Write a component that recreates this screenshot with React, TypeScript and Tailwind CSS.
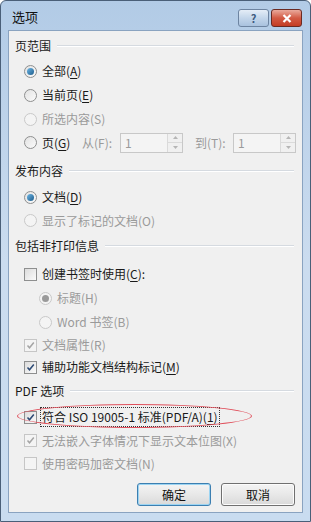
import React from 'react';

const FONT = "font-['Noto_Sans_CJK_SC','Noto_Sans',sans-serif]";

const Radio: React.FC<{ checked?: boolean; disabled?: boolean }> = ({ checked, disabled }) => (
  <span
    className={`w-[13px] h-[13px] rounded-full border flex items-center justify-center shrink-0 ${
      disabled ? 'border-[#c9c9c9] bg-[#f4f4f4]' : 'border-[#8e8f8f] bg-gradient-to-br from-[#e2e2e2] to-[#fbfbfb]'
    }`}
  >
    {checked && (
      <span
        className={`w-[7px] h-[7px] rounded-full ${
          disabled ? 'bg-[#9a9a9a]' : 'bg-gradient-to-br from-[#6eb7e6] to-[#1b5d8c]'
        }`}
      />
    )}
  </span>
);

const Check: React.FC<{ checked?: boolean; disabled?: boolean }> = ({ checked, disabled }) => (
  <span
    className={`w-[13px] h-[13px] border flex items-center justify-center shrink-0 ${
      disabled ? 'border-[#c6c6c6] bg-[#f4f4f4]' : 'border-[#8e8f8f] bg-gradient-to-br from-[#dcdcdc] to-[#fbfbfb]'
    }`}
  >
    {checked && (
      <svg width="9" height="9" viewBox="0 0 9 9">
        <path
          d="M1.5 4.5 L3.5 6.8 L7.8 1.5"
          fill="none"
          stroke={disabled ? '#a5a5a5' : '#2c4a75'}
          strokeWidth="1.5"
        />
      </svg>
    )}
  </span>
);

const Header: React.FC<{ text: string; className?: string }> = ({ text, className }) => (
  <div className={`h-[20px] flex items-center pl-[6px] pr-[8px] gap-[6px] ${className ?? ''}`}>
    <span className="text-[#1a1a1a]">{text}</span>
    <div className="flex-1 flex flex-col">
      <div className="h-px bg-[#d5dae0]" />
      <div className="h-px bg-white" />
    </div>
  </div>
);

const U: React.FC<{ children: React.ReactNode }> = ({ children }) => <span className="underline underline-offset-2">{children}</span>;

const Spin: React.FC<{ className?: string }> = ({ className }) => (
  <div className={`h-[20px] border border-[#c8c8c8] bg-[#f4f4f4] flex ${className ?? ''}`}>
    <span className="flex-1 pl-[4px] text-[#9a9a9a] leading-[18px]">1</span>
    <div className="w-[15px] flex flex-col border-l border-[#dadada]">
      <div className="flex-1 flex items-center justify-center border-b border-[#dadada] bg-[#f0f0f0]">
        <svg width="5" height="3" viewBox="0 0 5 3"><path d="M0 3 L2.5 0 L5 3Z" fill="#b5b5b5" /></svg>
      </div>
      <div className="flex-1 flex items-center justify-center bg-[#f0f0f0]">
        <svg width="5" height="3" viewBox="0 0 5 3"><path d="M0 0 L2.5 3 L5 0Z" fill="#b5b5b5" /></svg>
      </div>
    </div>
  </div>
);

const App: React.FC = () => {
  return (
    <div className={`w-[311px] h-[522px] ${FONT} text-[12px] text-[#1a1a1a] border border-[#4a5f78] rounded-t-[6px] bg-gradient-to-b from-[#b2cbe6] via-[#cbdcef] to-[#c9dcf0] flex flex-col overflow-hidden`}>
      {/* Title bar */}
      <div className="h-[29px] flex items-start shrink-0">
        <span className="ml-[11px] mt-[6px] text-[13px] text-[#111]">选项</span>
        <div className="ml-auto mt-[8px] mr-[8px] flex gap-[2px]">
          <div className="w-[31px] h-[18px] rounded-[3px] border border-[#6d84a1] bg-gradient-to-b from-[#e4edf7] via-[#c3d6ea] to-[#a9c2de] flex items-center justify-center">
            <span className="text-[11px] font-bold text-[#3c5a80] leading-none">?</span>
          </div>
          <div className="w-[31px] h-[18px] rounded-[3px] border border-[#6b2a22] bg-gradient-to-b from-[#e9a99c] via-[#d25a44] to-[#c43c22] flex items-center justify-center">
            <svg width="10" height="9" viewBox="0 0 10 9">
              <path d="M1.5 1 L8.5 8 M8.5 1 L1.5 8" stroke="#fff" strokeWidth="2.2" />
            </svg>
          </div>
        </div>
      </div>

      {/* Client area */}
      <div className="mx-[7px] mb-[8px] flex-1 bg-[#f0f0f0] border border-[#8aa3c0] relative flex flex-col">
        <Header text="页范围" className="mt-[5px]" />
        <div className="pl-[15px] flex flex-col mt-[3px]">
          <div className="h-[24px] flex items-center gap-[5px]"><Radio checked /><span>全部(<U>A</U>)</span></div>
          <div className="h-[24px] flex items-center gap-[5px]"><Radio /><span>当前页(<U>E</U>)</span></div>
          <div className="h-[24px] flex items-center gap-[5px] text-[#9a9a9a]"><Radio disabled /><span>所选内容(S)</span></div>
          <div className="h-[23px] flex items-center">
            <span className="flex items-center gap-[5px] w-[58px]"><Radio /><span>页(<U>G</U>)</span></span>
            <span className="text-[#9a9a9a] w-[38px]">从(F):</span>
            <Spin className="w-[63px]" />
            <span className="text-[#9a9a9a] ml-[12px] w-[38px]">到(T):</span>
            <Spin className="w-[63px]" />
          </div>
        </div>

        <Header text="发布内容" className="mt-[7px]" />
        <div className="pl-[15px] flex flex-col mt-[4px]">
          <div className="h-[24px] flex items-center gap-[5px]"><Radio checked /><span>文档(<U>D</U>)</span></div>
          <div className="h-[23px] flex items-center gap-[5px] text-[#9a9a9a]"><Radio disabled /><span>显示了标记的文档(O)</span></div>
        </div>

        <Header text="包括非打印信息" className="mt-[4px]" />
        <div className="pl-[15px] flex flex-col mt-[6px]">
          <div className="h-[24px] flex items-center gap-[5px]"><Check /><span>创建书签时使用(<U>C</U>):</span></div>
          <div className="h-[24px] flex items-center gap-[5px] pl-[15px] text-[#9a9a9a]"><Radio checked disabled /><span>标题(H)</span></div>
          <div className="h-[24px] flex items-center gap-[5px] pl-[15px] text-[#9a9a9a]"><Radio disabled /><span>Word 书签(B)</span></div>
          <div className="h-[22px] flex items-center gap-[5px] text-[#9a9a9a]"><Check checked disabled /><span>文档属性(R)</span></div>
          <div className="h-[22px] flex items-center gap-[5px]"><Check checked /><span>辅助功能文档结构标记(<U>M</U>)</span></div>
        </div>

        <Header text="PDF 选项" className="mt-[3px]" />
        <div className="pl-[15px] flex flex-col mt-[4px]">
          <div className="h-[24px] flex items-center gap-[3px]">
            <Check checked />
            <span className="border border-dotted border-[#333] px-[1px] leading-[18px]">符合 ISO 19005-1 标准(PDF/A)(<U>1</U>)</span>
          </div>
          <div className="h-[23px] flex items-center gap-[5px] text-[#9a9a9a]"><Check checked disabled /><span>无法嵌入字体情况下显示文本位图(X)</span></div>
          <div className="h-[23px] flex items-center gap-[5px] text-[#9a9a9a]"><Check disabled /><span>使用密码加密文档(N)</span></div>
        </div>

        <div className="mt-[8px] flex justify-end gap-[10px] pr-[7px]">
          <button className="w-[74px] h-[23px] rounded-[3px] border border-[#3c7fb1] shadow-[inset_0_0_0_1px_#9cd4f2] bg-gradient-to-b from-[#f4f4f4] via-[#e8e8e8] to-[#d9d9d9] text-[12px] text-[#111]">确定</button>
          <button className="w-[74px] h-[23px] rounded-[3px] border border-[#707070] shadow-[inset_0_0_0_1px_#fcfcfc] bg-gradient-to-b from-[#f4f4f4] via-[#e8e8e8] to-[#d9d9d9] text-[12px] text-[#111]">取消</button>
        </div>

        {/* red annotation ellipse */}
        <div className="absolute left-[8px] top-[373px] w-[235px] h-[24px] rounded-[50%] border border-[#e0505c] pointer-events-none" />
      </div>
    </div>
  );
};

export default App;
